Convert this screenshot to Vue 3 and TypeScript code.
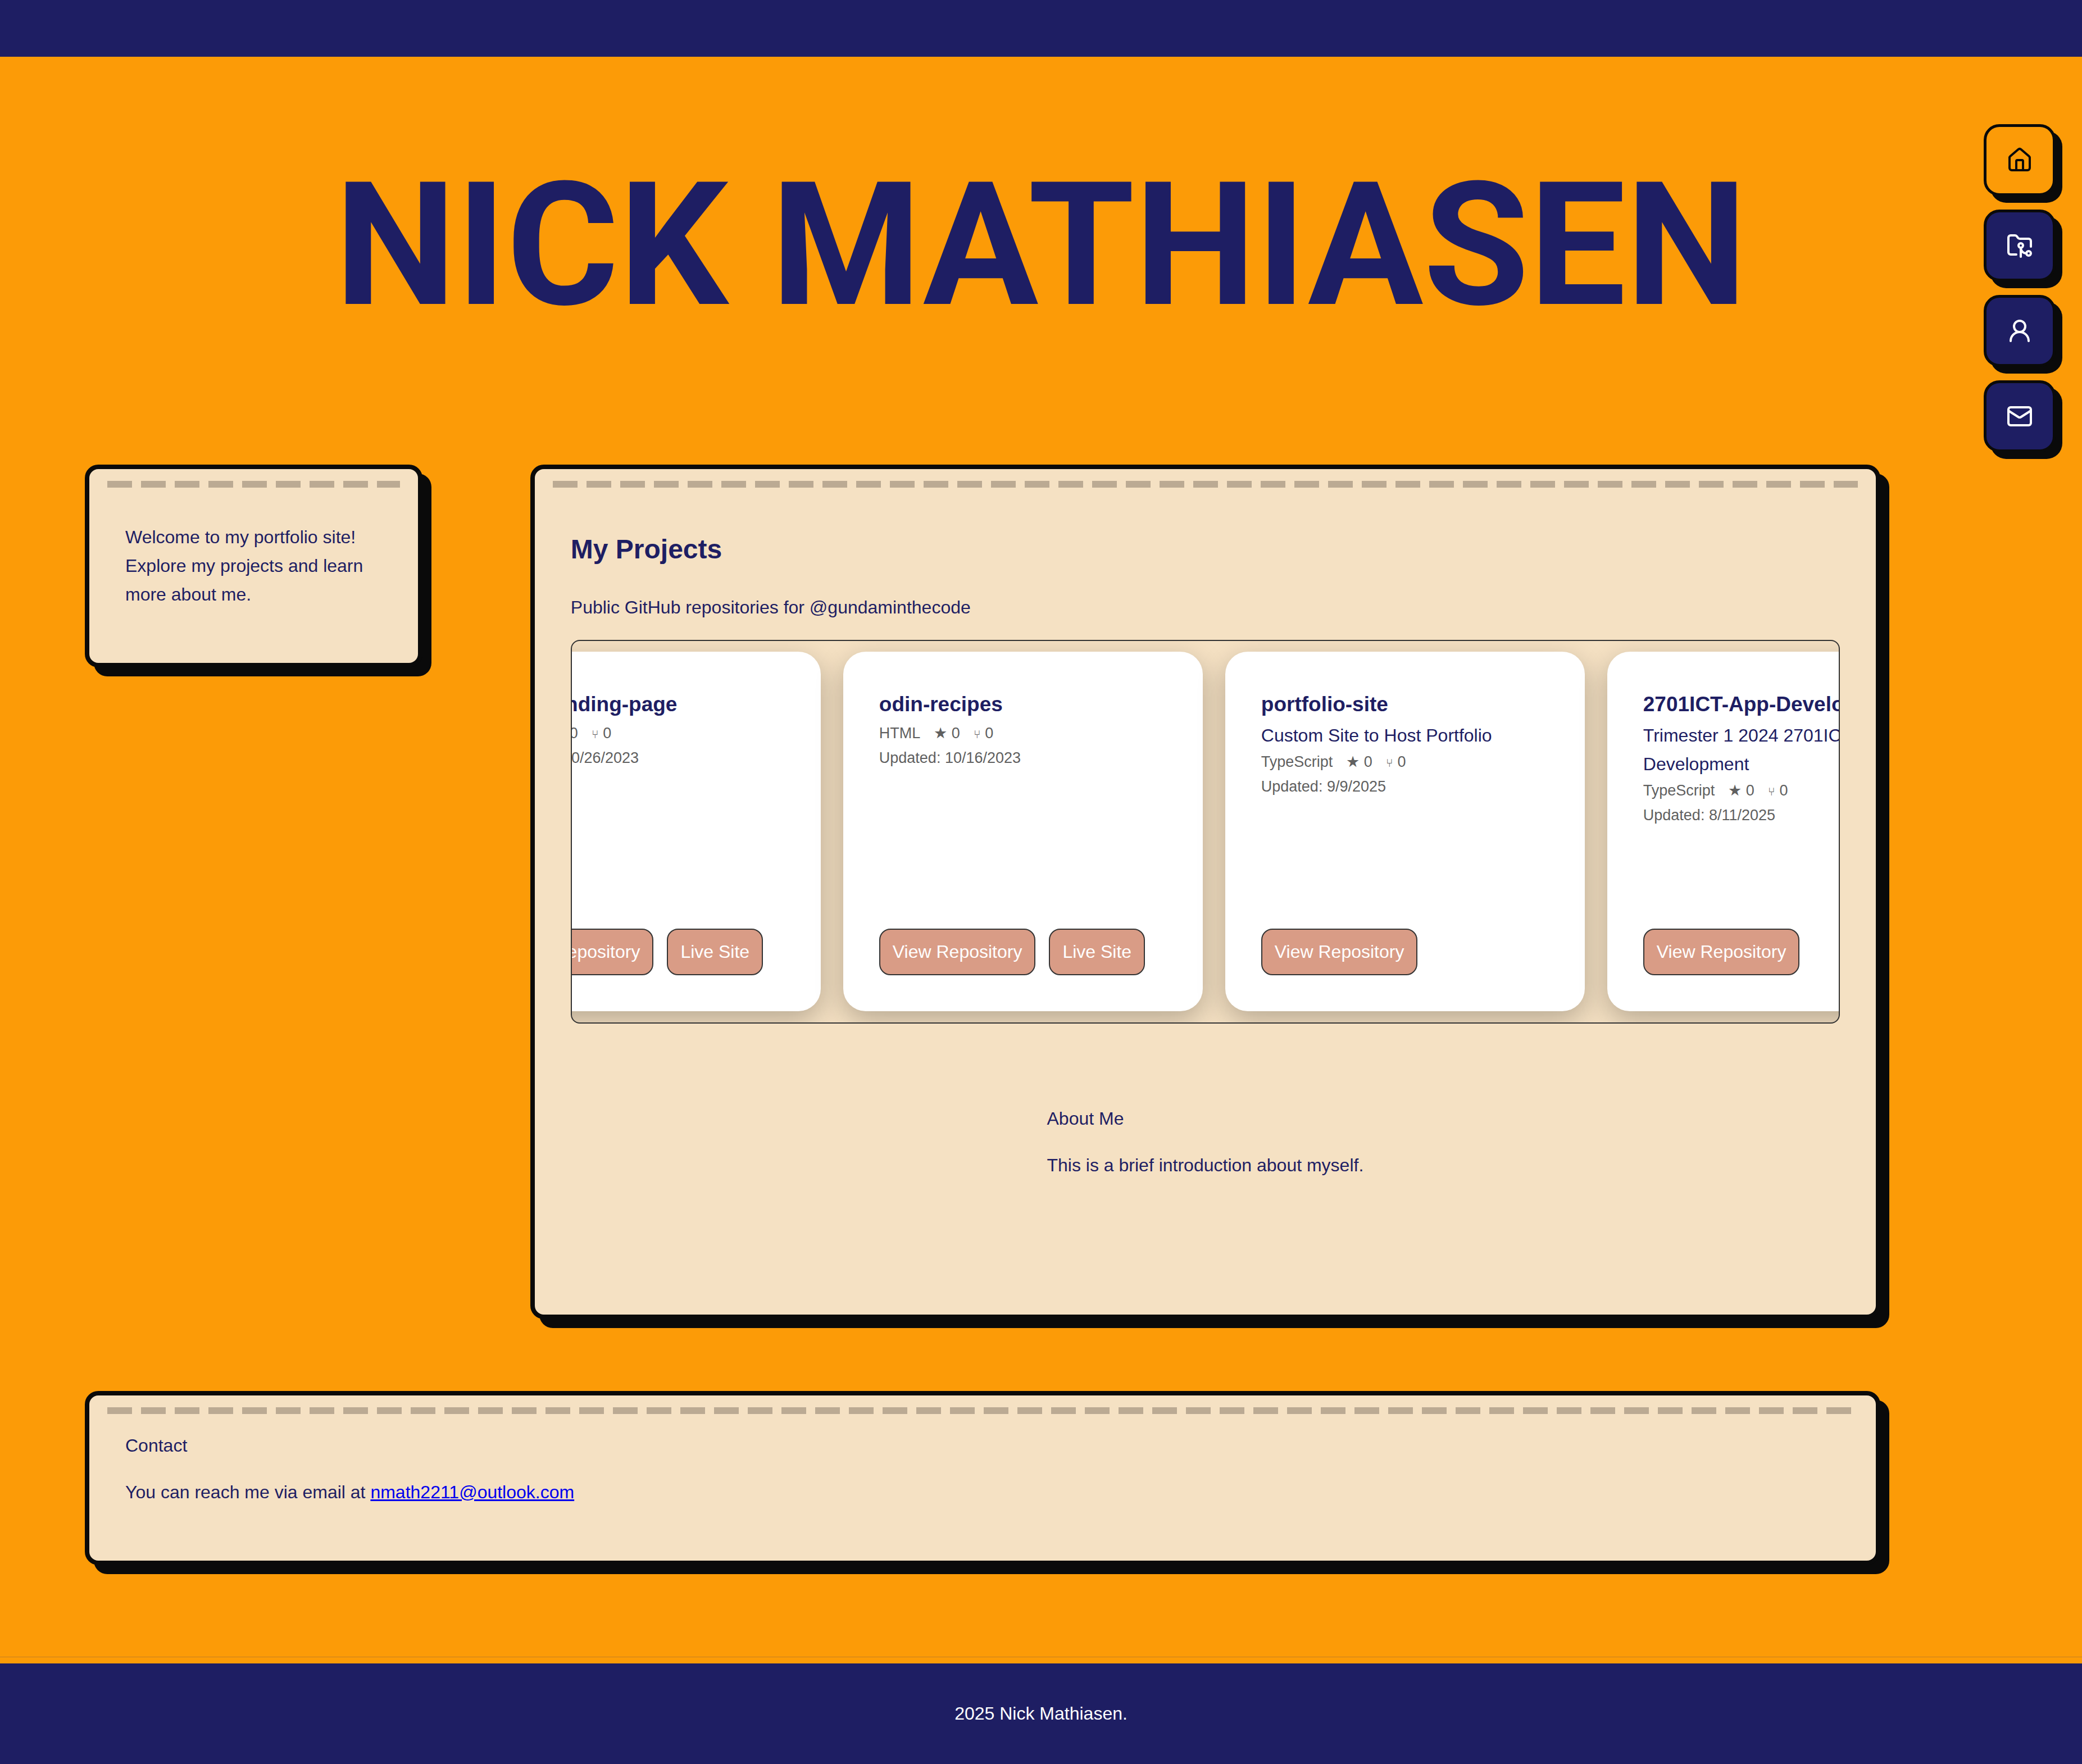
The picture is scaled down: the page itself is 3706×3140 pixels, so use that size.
<script setup lang="ts">
interface Repo {
  name: string
  description?: string
  language: string
  stars: number
  forks: number
  updated: string
  live: boolean
}

const user = 'gundaminthecode'

const repos: Repo[] = [
  { name: 'odin-landing-page', language: 'HTML', stars: 0, forks: 0, updated: '10/26/2023', live: true },
  { name: 'odin-recipes', language: 'HTML', stars: 0, forks: 0, updated: '10/16/2023', live: true },
  {
    name: 'portfolio-site',
    description: 'Custom Site to Host Portfolio',
    language: 'TypeScript',
    stars: 0,
    forks: 0,
    updated: '9/9/2025',
    live: false,
  },
  {
    name: '2701ICT-App-Development',
    description: 'Trimester 1 2024 2701ICT App Development',
    language: 'TypeScript',
    stars: 0,
    forks: 0,
    updated: '8/11/2025',
    live: false,
  },
]
</script>

<template>
  <div class="page">
    <header class="topbar"></header>

    <nav class="dock" aria-label="Sections">
      <a class="dock-item active" href="#home" aria-label="Home">
        <svg class="icon" viewBox="0 0 24 24">
          <path d="M15 21v-8a1 1 0 0 0-1-1h-4a1 1 0 0 0-1 1v8" />
          <path d="M3 10a2 2 0 0 1 .709-1.528l7-5.999a2 2 0 0 1 2.582 0l7 5.999A2 2 0 0 1 21 10v9a2 2 0 0 1-2 2H5a2 2 0 0 1-2-2z" />
        </svg>
      </a>
      <a class="dock-item" href="#projects" aria-label="Projects">
        <svg class="icon" viewBox="0 0 24 24">
          <path d="M9 20H4a2 2 0 0 1-2-2V5a2 2 0 0 1 2-2h3.9a2 2 0 0 1 1.69.9l.81 1.2a2 2 0 0 0 1.67.9H20a2 2 0 0 1 2 2v5" />
          <circle cx="13" cy="12" r="2" />
          <path d="M18 19c-2.8 0-5-2.2-5-5v8" />
          <circle cx="20" cy="19" r="2" />
        </svg>
      </a>
      <a class="dock-item" href="#about" aria-label="About">
        <svg class="icon" viewBox="0 0 24 24">
          <circle cx="12" cy="8" r="5" />
          <path d="M20 21a8 8 0 0 0-16 0" />
        </svg>
      </a>
      <a class="dock-item" href="#contact" aria-label="Contact">
        <svg class="icon" viewBox="0 0 24 24">
          <rect x="2" y="4" width="20" height="16" rx="2" />
          <path d="m22 7-8.991 5.727a2 2 0 0 1-2.009 0L2 7" />
        </svg>
      </a>
    </nav>

    <h1 id="home" class="hero">NICK MATHIASEN</h1>

    <main class="layout">
      <section class="panel">
        <p>Welcome to my portfolio site! Explore my projects and learn more about me.</p>
      </section>

      <section id="projects" class="panel">
        <h2>My Projects</h2>
        <p>Public GitHub repositories for @{{ user }}</p>
        <div class="carousel">
          <div class="track">
            <article v-for="repo in repos" :key="repo.name" class="repo">
              <h3>{{ repo.name }}</h3>
              <div v-if="repo.description">{{ repo.description }}</div>
              <div class="meta">
                <span>{{ repo.language }}</span>
                <span>★ {{ repo.stars }}</span>
                <span><span class="fork">⑂</span> {{ repo.forks }}</span>
              </div>
              <div class="meta">Updated: {{ repo.updated }}</div>
              <div class="actions">
                <a class="btn" :href="`#${repo.name}`">View Repository</a>
                <a v-if="repo.live" class="btn" :href="`#${repo.name}-live`">Live Site</a>
              </div>
            </article>
          </div>
        </div>
        <div id="about" class="about">
          <div>About Me</div>
          <p>This is a brief introduction about myself.</p>
        </div>
      </section>

      <section id="contact" class="panel contact">
        <div>Contact</div>
        <p>You can reach me via email at <a href="mailto:nmath2211@outlook.com">nmath2211@outlook.com</a></p>
      </section>
    </main>

    <footer class="footer">2025 Nick Mathiasen.</footer>
  </div>
</template>

<style>
body {
  margin: 0;
  background: #fc9b07;
}
</style>

<style scoped>
.page {
  --navy: #1e1e63;
  --ink: #0a0a0a;
  --orange: #fc9b07;
  --cream: #f5e1c3;
  min-height: 100vh;
  display: flex;
  flex-direction: column;
  background: var(--orange);
  color: var(--navy);
  font: 32px/51px "Liberation Sans", Arial, sans-serif;
}

.topbar {
  height: 101px;
  background: var(--navy);
}

.dock {
  position: fixed;
  top: 221px;
  right: 47px;
  display: flex;
  flex-direction: column;
  gap: 24px;
}

.dock-item {
  box-sizing: border-box;
  width: 128px;
  height: 128px;
  display: flex;
  align-items: center;
  justify-content: center;
  border: 5px solid var(--ink);
  border-radius: 28px;
  background: var(--navy);
  color: #fff;
  box-shadow: 12px 12px 0 var(--ink);
}

.dock-item.active {
  background: var(--orange);
  color: var(--ink);
}

.icon {
  width: 48px;
  height: 48px;
  fill: none;
  stroke: currentColor;
  stroke-width: 2;
  stroke-linecap: round;
  stroke-linejoin: round;
}

.hero {
  margin: 0;
  padding: 156px 0 210px;
  text-align: center;
  white-space: nowrap;
  font: 700 306px/360px Roboto, sans-serif;
}

.layout {
  display: grid;
  grid-template-columns: 1fr 4fr;
  align-items: start;
  gap: 128px 192px;
  padding: 0 359px 163px 151px;
  border-bottom: 1px solid #c68023;
}

.panel {
  position: relative;
  min-width: 0;
  padding: 64px;
  border: 8px solid var(--ink);
  border-radius: 24px;
  background: var(--cream);
  box-shadow: 16px 16px 0 var(--ink);
}

/* stitched strip along the top edge of every panel */
.panel::before {
  content: "";
  position: absolute;
  top: 21px;
  left: 32px;
  right: 32px;
  height: 12px;
  background: repeating-linear-gradient(90deg, #bbaa93 0 44px, transparent 44px 60px);
}

p {
  margin: 32px 0;
}

h2 {
  margin: 40px 0;
  font-size: 48px;
  line-height: 77px;
}

.carousel {
  overflow: hidden;
  padding: 19px 0 20px;
  border: 2px solid #333;
  border-radius: 16px;
}

.track {
  display: flex;
  gap: 40px;
  margin-left: -197px;
}

.repo {
  box-sizing: border-box;
  flex: 0 0 640px;
  height: 640px;
  display: flex;
  flex-direction: column;
  padding: 64px;
  border-radius: 40px;
  background: #fff;
  box-shadow: 0 16px 48px rgba(0, 0, 0, 0.25);
}

h3 {
  margin: 0;
  font-size: 37px;
  line-height: 60px;
}

.meta {
  display: flex;
  gap: 24px;
  color: #606060;
  font-size: 27px;
  line-height: 43px;
}

.fork {
  font-size: 21px;
}

.actions {
  display: flex;
  gap: 24px;
  margin-top: auto;
}

.btn {
  padding: 14px 22px;
  border: 2px solid #333;
  border-radius: 20px;
  background: #d99c86;
  color: #fff;
  text-decoration: none;
}

.about {
  display: flow-root;
  width: fit-content;
  margin: 144px auto;
}

.contact {
  grid-column: 1 / -1;
}

.contact a {
  color: #0000ee;
}

.footer {
  margin-top: auto;
  padding: 64px 0;
  background: var(--navy);
  color: #fff;
  text-align: center;
}
</style>
